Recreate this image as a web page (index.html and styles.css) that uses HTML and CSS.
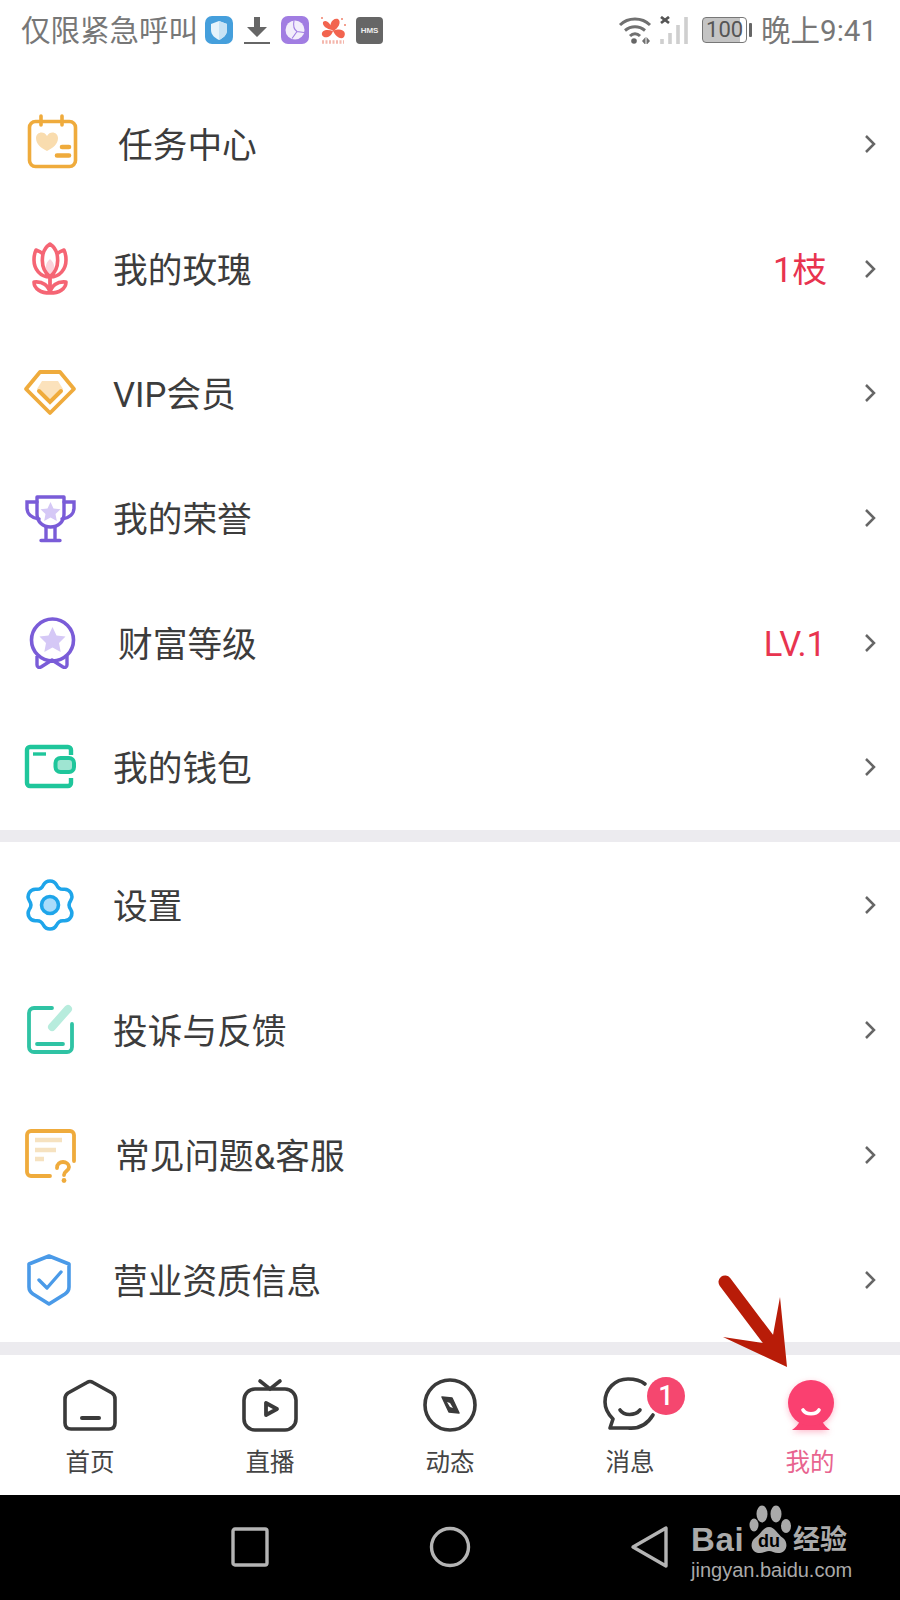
FILE: index.html
```html
<!DOCTYPE html>
<html lang="zh-CN">
<head>
<meta charset="utf-8">
<title>我的</title>
<link rel="stylesheet" href="styles.css">
</head>
<body>
<div class="phone">
  <header class="status">
    <span class="status-text">仅限紧急呼叫</span>
    <svg class="note" viewBox="0 0 28 28"><rect width="28" height="28" rx="7" fill="#459fdc"/><path d="M14 5l8 3v6c0 5-4 8-8 10-4-2-8-5-8-10V8z" fill="#e6f3fb"/><path d="M14 5l8 3v6c0 5-4 8-8 10z" fill="#c7e3f5"/></svg>
    <svg class="note" viewBox="0 0 28 28"><path d="M11 1h6v10h7l-10 10L4 11h7z" fill="#666"/><rect x="1" y="26" width="26" height="2" fill="#666"/></svg>
    <svg class="note" viewBox="0 0 28 28"><rect width="28" height="28" rx="7" fill="#a17de2"/><circle cx="14" cy="14" r="9.500" fill="#f2edfb"/><path d="M13 4.500c-1 5 0 9 3 11l7 1M16 15.500l-5 7" stroke="#a17de2" stroke-width="1.100" fill="none"/></svg>
    <svg class="note" viewBox="0 0 28 28"><path d="M14 15C8 9 14 1 19 3c4 3 0 10-5 12zM14 15c9-4 14 1 11 6-3 3-8 0-11-6zM14 15c-2 7-9 8-11 4-1-5 5-6 11-4zM13 14C8 13 3 10 4 6c3-3 8 1 9 8z" fill="#f2644f"/><path d="M3 26h22" stroke="#f4b7ad" stroke-width="3.500" stroke-dasharray="2 1.500"/><path d="M22 3h2M2 2h2M25 9h2" stroke="#f4a08f" stroke-width="2"/></svg>
    <span class="hms">HMS</span>
    <span class="status-right">
      <svg class="wifi" viewBox="0 0 34 28"><path d="M2 9c8-8 22-8 30 0M7 14.500c6-5 14-5 20 0M12 20c3-3 7-3 10 0" fill="none" stroke="#707070" stroke-width="3"/><circle cx="16" cy="25" r="2.800" fill="#666"/><path d="M24 25l3.500-4v8zM28.500 21l3.500 4-3.500 4z" fill="#707070"/></svg>
      <svg class="signal" viewBox="0 0 30 28"><path d="M2 7l8-6M2 1l8 6" stroke="#555" stroke-width="2.800"/><path d="M3 23v5M11 17v11M19 9v19M27 1v27" stroke="#cfcfcf" stroke-width="3.600"/></svg>
      <span class="battery"><span class="battery-body">100</span><span class="battery-tip"></span></span>
      <span class="status-text">晚上9:41</span>
    </span>
  </header>

  <main>
    <ul class="group group-first">
      <li class="row">
        <svg class="icon" viewBox="0 0 60 60"><rect x="9.500" y="7.500" width="46" height="45" rx="6" fill="none" stroke="#efab3c" stroke-width="3.600"/><path d="M21 2v9M42 2v9" stroke="#efab3c" stroke-width="3.600" stroke-linecap="round"/><path d="M27 37c-6-3-11-7-11-13 0-6 8-8 11-2 3-6 11-4 11 2 0 6-5 10-11 13z" fill="#f9dcae"/><path d="M42 33h7M37 41.500h12" stroke="#efab3c" stroke-width="4.600" stroke-linecap="round"/></svg>
        <span class="label label-in">任务中心</span>
        <svg class="chev" viewBox="0 0 12 20"><path d="M2 2l8 8-8 8" fill="none" stroke="#666" stroke-width="2.500"/></svg>
      </li>
      <li class="row">
        <svg class="icon" viewBox="0 0 60 60"><path d="M30 20c-5 4-6 11 0 17 6-6 5-13 0-17z" fill="#fbd3dc"/><path d="M30 38C20 38 14 30 14 21 14 16 15 13 16 11 19 12 21 13 23 15 24 11 27 7 30 5 33 7 36 11 37 15 39 13 41 12 44 11 45 13 46 16 46 21 46 30 40 38 30 38zM23 15C21 25 24 33 30 38 36 33 39 25 37 15" fill="none" stroke="#f56574" stroke-width="3.600" stroke-linejoin="round"/><path d="M30 38v16" stroke="#f56574" stroke-width="3.800"/><path d="M30 54C21 54 14 50 14 43 23 42 29 47 30 54 31 47 37 42 46 43 46 50 39 54 30 54z" fill="none" stroke="#f56574" stroke-width="3.600" stroke-linejoin="round"/></svg>
        <span class="label">我的玫瑰</span>
        <span class="value">1枝</span>
        <svg class="chev" viewBox="0 0 12 20"><path d="M2 2l8 8-8 8" fill="none" stroke="#666" stroke-width="2.500"/></svg>
      </li>
      <li class="row">
        <svg class="icon" viewBox="0 0 60 60"><path d="M20 9h20l14 17-24 24L6 26z" fill="none" stroke="#efab3c" stroke-width="3.800" stroke-linejoin="round"/><path d="M22 18h16l5 8-13 13-13-13z" fill="#fbe2bc"/><path d="M19 28l11 11 11-11" fill="none" stroke="#efab3c" stroke-width="4" stroke-linecap="round"/></svg>
        <span class="label">VIP会员</span>
        <svg class="chev" viewBox="0 0 12 20"><path d="M2 2l8 8-8 8" fill="none" stroke="#666" stroke-width="2.500"/></svg>
      </li>
      <li class="row">
        <svg class="icon" viewBox="0 0 60 60"><path d="M17 9h27v17c0 8-6 13-13.500 13S17 34 17 26z" fill="none" stroke="#7a5cd8" stroke-width="3.400" stroke-linejoin="round"/><path d="M17 14H7v6c0 6 5 10 12 11M44 14h10v6c0 6-5 10-12 11M26 39v13M35 39v13M21 52.500h19" fill="none" stroke="#7a5cd8" stroke-width="3.400" stroke-linecap="round"/><path d="M30.500 14l3 6.500 7 .8-5 4.700 1.300 7-6.300-3.500-6.300 3.500 1.300-7-5-4.700 7-.8z" fill="#d5c8f6"/></svg>
        <span class="label">我的荣誉</span>
        <svg class="chev" viewBox="0 0 12 20"><path d="M2 2l8 8-8 8" fill="none" stroke="#666" stroke-width="2.500"/></svg>
      </li>
      <li class="row">
        <svg class="icon" viewBox="0 0 60 60"><circle cx="32.500" cy="27" r="21" fill="none" stroke="#7a5cd8" stroke-width="3.600"/><path d="M17 43v9c0 2 2 3 4 2l11-7 11 7c2 1 4 0 4-2v-9" fill="none" stroke="#7a5cd8" stroke-width="3.400" stroke-linejoin="round"/><path d="M32.500 14l4 8.500 9 1-6.500 6.500 1.700 9-8.200-4.500-8.200 4.500 1.700-9-6.500-6.500 9-1z" fill="#d5c8f6"/></svg>
        <span class="label label-in">财富等级</span>
        <span class="value value-lv">LV.1</span>
        <svg class="chev" viewBox="0 0 12 20"><path d="M2 2l8 8-8 8" fill="none" stroke="#666" stroke-width="2.500"/></svg>
      </li>
      <li class="row">
        <svg class="icon" viewBox="0 0 60 60"><path d="M51 18v-5a3 3 0 0 0-3-3H10a3 3 0 0 0-3 3v33a3 3 0 0 0 3 3h38a3 3 0 0 0 3-3v-5" fill="none" stroke="#1fc69b" stroke-width="4.400"/><rect x="35.500" y="21" width="18.500" height="14" rx="5" fill="#9fe5d2" stroke="#1fc69b" stroke-width="4"/><path d="M13 17h13" stroke="#1fc69b" stroke-width="3.400"/></svg>
        <span class="label">我的钱包</span>
        <svg class="chev" viewBox="0 0 12 20"><path d="M2 2l8 8-8 8" fill="none" stroke="#666" stroke-width="2.500"/></svg>
      </li>
    </ul>
    <div class="divider"></div>
    <ul class="group">
      <li class="row">
        <svg class="icon" viewBox="0 0 60 60"><path transform="translate(30 30) scale(.92) translate(-30 -30)" d="M22.900 8.100A8 8 0 0 1 37.100 8.100A8 8 0 0 0 45.400 12.900A8 8 0 0 1 52.500 25.200A8 8 0 0 0 52.500 34.800A8 8 0 0 1 45.400 47.100A8 8 0 0 0 37.100 51.900A8 8 0 0 1 22.900 51.900A8 8 0 0 0 14.600 47.100A8 8 0 0 1 7.500 34.800A8 8 0 0 0 7.500 25.200A8 8 0 0 1 14.600 12.900A8 8 0 0 0 22.900 8.100z" fill="none" stroke="#1ea5ea" stroke-width="3.800"/><circle cx="30" cy="30" r="8.500" fill="#a9dcfb" stroke="#1ea5ea" stroke-width="3.600"/></svg>
        <span class="label">设置</span>
        <svg class="chev" viewBox="0 0 12 20"><path d="M2 2l8 8-8 8" fill="none" stroke="#666" stroke-width="2.500"/></svg>
      </li>
      <li class="row">
        <svg class="icon" viewBox="0 0 60 60"><path d="M32 8H14a5 5 0 0 0-5 5v34a5 5 0 0 0 5 5h33a5 5 0 0 0 5-5V24" fill="none" stroke="#2fc3a4" stroke-width="3.800" stroke-linecap="round"/><path d="M32 27L48 9" stroke="#b7ecdd" stroke-width="8" stroke-linecap="round"/><path d="M17 44h26" stroke="#2fc3a4" stroke-width="3.800" stroke-linecap="round"/></svg>
        <span class="label">投诉与反馈</span>
        <svg class="chev" viewBox="0 0 12 20"><path d="M2 2l8 8-8 8" fill="none" stroke="#666" stroke-width="2.500"/></svg>
      </li>
      <li class="row row-faq">
        <svg class="icon" viewBox="0 0 60 60"><path d="M30 51H11a4 4 0 0 1-4-4V10a4 4 0 0 1 4-4h39a4 4 0 0 1 4 4v26" fill="none" stroke="#efab3c" stroke-width="3.800" stroke-linecap="round"/><path d="M15 15h27M15 25h21M15 34h9" stroke="#f6e2c0" stroke-width="4.400"/><path d="M37 43c0-4 3-6 6-6s6 2 6 5c0 4-5 4-5 8" fill="none" stroke="#efab3c" stroke-width="3.800" stroke-linecap="round"/><circle cx="44" cy="55.500" r="2.400" fill="#efab3c"/></svg>
        <span class="label label-faq">常见问题&amp;客服</span>
        <svg class="chev" viewBox="0 0 12 20"><path d="M2 2l8 8-8 8" fill="none" stroke="#666" stroke-width="2.500"/></svg>
      </li>
      <li class="row">
        <svg class="icon" viewBox="0 0 60 60"><path d="M29 6l20 8v23c0 3-1 5-4 7l-16 10-16-10c-3-2-4-4-4-7V14z" fill="none" stroke="#4a9ae8" stroke-width="3.600" stroke-linejoin="round"/><path d="M19 30l8 8 14-16" fill="none" stroke="#4a9ae8" stroke-width="3.400" stroke-linecap="round" stroke-linejoin="round"/></svg>
        <span class="label">营业资质信息</span>
        <svg class="chev" viewBox="0 0 12 20"><path d="M2 2l8 8-8 8" fill="none" stroke="#666" stroke-width="2.500"/></svg>
      </li>
    </ul>
    <div class="divider"></div>
  </main>

  <nav class="tabs">
    <div class="tab">
      <svg class="tab-icon" viewBox="0 0 60 60"><path d="M27 7.500Q30 5.500 33 7.500L52 18Q55 20 55 24V48Q55 54 49 54H11Q5 54 5 48V24Q5 20 8 18Z" fill="none" stroke="#3a3a3a" stroke-width="3.600" stroke-linejoin="round"/><path d="M22 43h17" stroke="#3a3a3a" stroke-width="4" stroke-linecap="round"/></svg>
      <span class="tab-label">首页</span>
    </div>
    <div class="tab">
      <svg class="tab-icon" viewBox="0 0 60 60"><rect x="4" y="14" width="52" height="41" rx="11" fill="none" stroke="#3a3a3a" stroke-width="3.600"/><path d="M20 6l10 8 10-8" fill="none" stroke="#3a3a3a" stroke-width="3.600" stroke-linecap="round"/><path d="M26 28v12l11-6z" fill="none" stroke="#3a3a3a" stroke-width="3.800" stroke-linejoin="round"/></svg>
      <span class="tab-label">直播</span>
    </div>
    <div class="tab">
      <svg class="tab-icon" viewBox="0 0 60 60"><circle cx="30" cy="30" r="25" fill="none" stroke="#3a3a3a" stroke-width="3.600"/><path d="M22 22l10 1 7 15-10-1z" fill="#3a3a3a" stroke="#3a3a3a" stroke-width="1.500" stroke-linejoin="round"/><path d="M27 27l3 1 3 5-3-1z" fill="#fff"/></svg>
      <span class="tab-label">动态</span>
    </div>
    <div class="tab">
      <svg class="tab-icon" viewBox="0 0 60 60"><path d="M45 9C40 5 34 4 28 4 15 4 5 14 5 27 5 33 8 39 13 44L10 53H28C38 54 47 50 53 40" fill="none" stroke="#3a3a3a" stroke-width="3.600" stroke-linecap="round" stroke-linejoin="round"/><path d="M20 35c4 6 15 6 20 0" fill="none" stroke="#3a3a3a" stroke-width="3.600" stroke-linecap="round"/></svg>
      <span class="tab-label">消息</span>
      <span class="badge">1</span>
    </div>
    <div class="tab tab-active">
      <svg class="tab-icon tab-icon-me" viewBox="0 0 60 60"><path d="M20 46c-2 4-5 7-8 9h38c-3-2-6-5-8-9z" fill="#fa4070"/><circle cx="31" cy="28" r="23" fill="#fa4070"/><path d="M23 35c3 5 13 5 16 0" fill="none" stroke="#fff" stroke-width="3.600" stroke-linecap="round"/></svg>
      <span class="tab-label">我的</span>
    </div>
  </nav>

  <footer class="navbar">
    <span class="nav-btn"><svg class="nav-icon" viewBox="0 0 44 44"><rect x="5" y="4" width="34" height="36" rx="2" fill="none" stroke="#b4b4b4" stroke-width="3.400"/></svg></span>
    <span class="nav-btn"><svg class="nav-icon" viewBox="0 0 44 44"><circle cx="22" cy="22" r="18.500" fill="none" stroke="#b4b4b4" stroke-width="3.400"/></svg></span>
    <span class="nav-btn"><svg class="nav-icon" viewBox="0 0 44 44"><path d="M38 3v38L5 22z" fill="none" stroke="#b4b4b4" stroke-width="3.400" stroke-linejoin="round"/></svg></span>
    <div class="mark">
      <svg class="paw" viewBox="0 0 48 53"><ellipse cx="7" cy="22" rx="4.500" ry="6.500" fill="#aaa"/><ellipse cx="15" cy="11" rx="5.500" ry="8.500" fill="#aaa"/><ellipse cx="29" cy="11" rx="5.500" ry="8.500" fill="#aaa"/><ellipse cx="39" cy="23" rx="5" ry="7" fill="#aaa"/><path d="M22 24c6 0 8 7 14 11 6 5 4 15-5 15-4 0-6-2-9-2s-5 2-9 2c-9 0-11-10-5-15 6-4 8-11 14-11z" fill="#aaa"/></svg>
      <span class="mark-du">du</span>
      <span class="mark-bai">Bai</span>
      <span class="mark-cn">经验</span>
      <span class="mark-url">jingyan.baidu.com</span>
    </div>
  </footer>

  <svg class="arrow" viewBox="0 0 100 110"><path d="M15 12L58 69" stroke="#b81c08" stroke-width="13" stroke-linecap="round" fill="none"/><path d="M77 97L70 27 63 65 53 73 13 67z" fill="#b81c08"/></svg>
</div>
</body>
</html>
```
FILE: styles.css
```css
* { box-sizing: border-box; }
html, body { margin: 0; padding: 0; background: #fff; }
body { font-family: Roboto, "Noto Sans CJK SC", "Noto Sans", sans-serif; color: #3c3c3c; }
.phone { position: relative; width: 900px; height: 1600px; overflow: hidden; display: flex; flex-direction: column; }

.status { height: 60px; display: flex; align-items: center; padding: 0 23px 0 21px; color: #777; }
.status-text { font-size: 29.500px; line-height: 60px; padding-top: 2px; color: #777; }
.note { width: 28px; height: 28px; margin-left: 10px; flex: none; }
.status-text + .note { margin-left: 7px; }
.hms { width: 27px; height: 27px; margin-left: 9px; border-radius: 4px; background: #666; color: #eee; font: 700 8px/27px "Liberation Sans", sans-serif; text-align: center; }
.status-right { margin-left: auto; display: flex; align-items: center; }
.wifi { width: 34px; height: 28px; }
.signal { width: 30px; height: 28px; margin-left: 7px; }
.battery { display: flex; align-items: center; margin: 0 9px 0 13px; }
.battery-body { width: 45px; height: 26px; border: 1.500px solid #777; border-radius: 4px; background: linear-gradient(90deg, #c4c4c4 85%, #fff 85%); color: #555; font: 400 22px/23px Roboto, sans-serif; text-align: center; }
.battery-tip { width: 3px; height: 14px; margin-left: 2px; border-radius: 1px; background: #666; }

main { flex: none; padding-top: 21.500px; }
.group { list-style: none; margin: 0; padding: 0; }
.group-first .row { height: 124.700px; }
.row { height: 125px; display: flex; align-items: center; padding: 0 24px 0 20px; }
.icon { width: 60px; height: 60px; flex: none; }
.label { margin-left: 33px; padding-top: 4px; font-size: 34.700px; line-height: 50px; color: #3c3c3c; }
.label-in { margin-left: 38px; }
.label-faq { margin-left: 35px; }
.value { margin-left: auto; padding-top: 2px; font-size: 34.500px; line-height: 50px; color: #e8344f; }
.value-lv { margin-right: 1px; }
.chev { width: 12px; height: 20px; flex: none; margin-left: 37px; }
.label + .chev { margin-left: auto; }
.divider { height: 12.500px; background: #ecebef; }

.tabs { flex: none; height: 140px; display: grid; grid-template-columns: repeat(5, 180px); background: #fff; }
.tab { position: relative; display: flex; flex-direction: column; align-items: center; padding-top: 20px; }
.tab-icon { width: 60px; height: 60px; display: block; }
.tab-icon-me { filter: drop-shadow(0 2px 3px rgba(250, 64, 112, 0.35)); }
.tab-label { margin-top: 10px; font-size: 24.500px; line-height: 36px; color: #444; }
.tab-active .tab-label { color: #e8648f; }
.badge { position: absolute; left: 107px; top: 22px; width: 38px; height: 38px; border-radius: 50%; background: #f5476f; color: #fff; font-size: 27px; font-weight: 500; line-height: 38px; text-align: center; }

.navbar { position: relative; flex: 1; background: #000; display: grid; grid-template-columns: repeat(3, 200px); padding: 0 150px; align-items: center; justify-items: center; }
.nav-btn { display: flex; }
.nav-icon { width: 44px; height: 44px; display: block; }
.mark { position: absolute; left: 689px; top: 8px; width: 165px; height: 76px; color: #aaa; }
.paw { position: absolute; left: 58px; top: 0; width: 48px; height: 53px; }
.mark-du { position: absolute; left: 65px; top: 28px; width: 30px; color: #000; font: 700 18px/20px "Liberation Sans", sans-serif; text-align: center; }
.mark-bai { position: absolute; left: 2px; top: 19px; font: 700 33px/36px "Liberation Sans", sans-serif; letter-spacing: 0.7px; }
.mark-cn { position: absolute; left: 104px; top: 19px; font-size: 27px; line-height: 36px; font-weight: 700; }
.mark-url { position: absolute; left: 2px; top: 55px; font: 400 20px/24px "Liberation Sans", sans-serif; white-space: nowrap; }

.arrow { position: absolute; left: 710px; top: 1270px; width: 100px; height: 110px; }
```
